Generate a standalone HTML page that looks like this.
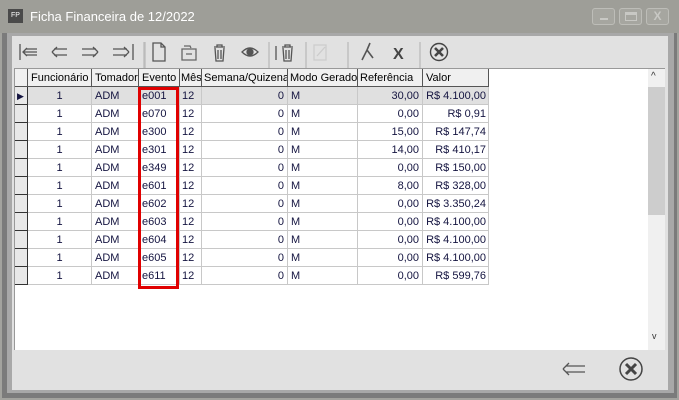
<!DOCTYPE html>
<html><head><meta charset="utf-8"><style>
*{margin:0;padding:0;box-sizing:border-box}
body{width:679px;height:400px;overflow:hidden;background:#a3a39e;font-family:"Liberation Sans",sans-serif;font-size:11px;position:relative}
.abs{position:absolute}
#title{left:0;top:0;width:679px;height:33px;background:#9e9e98}
#frame{left:2px;top:33px;width:675px;height:365px;background:#7b7b7b}
#frame2{left:7px;top:33px;width:667px;height:360px;background:#a8a8a8}
#panel{left:12px;top:36px;width:656px;height:354px;background:#e1e1e1}
.grid{left:14px;top:68px;width:651px;height:282px;background:#fff;border-top:1px solid #999;border-left:1px solid #999}
.c{position:absolute;height:18px;line-height:18px;border-right:1px solid #c8c8c8;border-bottom:1px solid #c8c8c8;color:#141440;white-space:nowrap;overflow:hidden;padding:0 3px}
.h{background:#f0f0f0;border-right:1px solid #555;border-bottom:1px solid #555;color:#000}
.ind{background:#e8e8e8;border-right:1px solid #333;border-bottom:1px solid #333}
.r{text-align:right}.m{text-align:center}
.sel{background:#e0e0e0}
.ic{position:absolute;top:41px}
.btn{position:absolute;top:8px;width:23px;height:17px;border:1px solid #bdbdb8;border-radius:3px;background:#a6a6a0}
</style></head><body>
<div id="title" class="abs"></div>
<div class="abs" style="left:8px;top:9px;width:15px;height:14px;background:#4a4a4a;color:#fff;font-size:7px;line-height:14px;text-align:center">FP</div>
<div class="abs" style="left:30px;top:9px;color:#fff;font-size:13px">Ficha Financeira de 12/2022</div>
<div class="btn" style="left:592px"><div class="abs" style="left:7px;top:9px;width:8px;height:2px;background:#c8c8c4"></div></div>
<div class="btn" style="left:619px"><div class="abs" style="left:5px;top:3px;width:12px;height:9px;border:1px solid #c8c8c4;border-top-width:3px"></div></div>
<div class="btn" style="left:646px;color:#c8c8c4;font-weight:bold;font-size:12px;line-height:15px;text-align:center">X</div>
<div id="frame" class="abs"></div>
<div id="frame2" class="abs"></div>
<div id="panel" class="abs"></div>
<svg class="abs" style="left:14px;top:38px" width="440" height="30" fill="none" stroke="#555" stroke-width="1.3">
<path d="M6 6v16M9 14h14M13 10l-4 4 4 4M12 11h11M12 17h11" />
<path d="M38 14l5-5M38 14l5 5M40 11h13M40 17h13"/>
<path d="M84 14l-5-5M84 14l-5 5M68 11h14M68 17h14"/>
<path d="M115 14l-5-5M115 14l-5 5M99 11h14M99 17h14M119 6v16"/>
<path d="M130 4v26M131 4v26" stroke="#bbb"/>
<path d="M139 5h8l4 4v14h-12z M147 5v4h4"/>
<path d="M168 11h14v11h-14zM170 8h6l1 2M172 16h6" stroke="#666"/>
<path d="M200 9h11M203 9v-2h5v2M201 10l1 13h7l1-13M204 12v9M207 12v9"/>
<path d="M228 14q8-8 16 0q-8 8-16 0z"/><circle cx="236" cy="14" r="3" fill="#555"/>
<path d="M255 4v26" stroke="#bbb"/>
<path d="M262 8v14M268 9h11M271 9v-2h5v2M269 10l1 13h7l1-13M272 12v9M275 12v9"/>
<path d="M292 4v26M334 4v26" stroke="#bbb"/>
<path d="M300 7h12v15h-12zM303 18l8-9" stroke="#ccc"/>
<path d="M348 22l5-10 3-7M353 12l6 8" stroke-width="1.6"/>
<text x="379" y="21" font-family="Liberation Sans" font-weight="bold" font-size="16" fill="#444" stroke="none">X</text>
<path d="M406 4v26" stroke="#bbb"/>
<circle cx="425" cy="14" r="8.5" stroke="#444" stroke-width="1.4"/>
<path d="M421 10l8 8M429 10l-8 8" stroke="#444" stroke-width="2.6"/>
</svg>
<div class="grid abs">
<div class="c h" style="left:0;top:0;width:13px;background:#f0f0f0"></div>
<div class="c h" style="left:13px;top:0;width:64px">Funcionário</div>
<div class="c h" style="left:77px;top:0;width:47px">Tomador</div>
<div class="c h" style="left:124px;top:0;width:41px">Evento</div>
<div class="c h" style="left:165px;top:0;width:22px;padding:0 1px">Mês</div>
<div class="c h" style="left:187px;top:0;width:86px;padding:0 2px">Semana/Quizena</div>
<div class="c h" style="left:273px;top:0;width:70px;padding:0 2px">Modo Gerado</div>
<div class="c h" style="left:343px;top:0;width:65px;padding:0 2px">Referência</div>
<div class="c h" style="left:408px;top:0;width:66px">Valor</div>
<div id="rows"></div>
<div class="abs" style="left:633px;top:0;width:17px;height:281px;background:#f0f0f0"></div>
<div class="abs" style="left:633px;top:18px;width:17px;height:128px;background:#cdcdcd"></div>
<div class="abs" style="left:636px;top:2px;font-size:10px;color:#333">^</div>
<div class="abs" style="left:637px;top:262px;font-size:9px;color:#333">v</div>
</div>
<div class="abs" style="left:138px;top:87px;width:41px;height:202px;border:3px solid #e00000"></div>
<svg class="abs" style="left:555px;top:355px" width="100" height="30" fill="none" stroke="#555" stroke-width="1.3">
<path d="M8 14l6-6M8 14l6 6M11 11h19M11 17h19"/>
<circle cx="76" cy="14" r="11" stroke="#444" stroke-width="1.5"/>
<path d="M71 9l10 10M81 9l-10 10" stroke="#444" stroke-width="3"/>
</svg>
<script>
var d=[["e001","30,00","R$ 4.100,00"],["e070","0,00","R$ 0,91"],["e300","15,00","R$ 147,74"],["e301","14,00","R$ 410,17"],["e349","0,00","R$ 150,00"],["e601","8,00","R$ 328,00"],["e602","0,00","R$ 3.350,24"],["e603","0,00","R$ 4.100,00"],["e604","0,00","R$ 4.100,00"],["e605","0,00","R$ 4.100,00"],["e611","0,00","R$ 599,76"]];
var h="";d.forEach(function(r,i){var t=18+i*18,s=i==0?" sel":"";
h+='<div class="c ind" style="left:0;top:'+t+'px;width:13px">'+(i==0?'<span style="font-size:9px;margin-left:-1px">&#9654;</span>':'')+'</div>';
h+='<div class="c m'+s+'" style="left:13px;top:'+t+'px;width:64px">1</div>';
h+='<div class="c'+s+'" style="left:77px;top:'+t+'px;width:47px">ADM</div>';
h+='<div class="c'+s+'" style="left:124px;top:'+t+'px;width:41px">'+r[0]+'</div>';
h+='<div class="c'+s+'" style="left:165px;top:'+t+'px;width:22px;padding:0 2px">12</div>';
h+='<div class="c r'+s+'" style="left:187px;top:'+t+'px;width:86px">0</div>';
h+='<div class="c'+s+'" style="left:273px;top:'+t+'px;width:70px">M</div>';
h+='<div class="c r'+s+'" style="left:343px;top:'+t+'px;width:65px">'+r[1]+'</div>';
h+='<div class="c r'+s+'" style="left:408px;top:'+t+'px;width:66px;padding:0 2px">'+r[2]+'</div>';});
document.getElementById("rows").innerHTML=h;
</script>
</body></html>
